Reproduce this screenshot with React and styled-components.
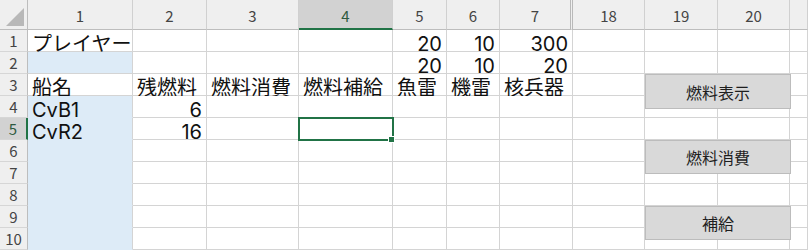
import React from 'react';
import styled, { createGlobalStyle, css } from 'styled-components';

const GlobalStyle = createGlobalStyle`
  body {
    margin: 0;
    background: #ffffff;
    overflow: hidden;
    font-family: "Noto Sans CJK JP", "Noto Sans", sans-serif;
  }
`;

const GREEN = '#217346';
const GRID = '#d4d4d4';
const FILL = '#ddebf7';

const columns = [
  { label: '1', w: 105 },
  { label: '2', w: 74 },
  { label: '3', w: 92 },
  { label: '4', w: 94, selected: true },
  { label: '5', w: 54 },
  { label: '6', w: 53 },
  { label: '7', w: 73, hiddenAfter: true },
  { label: '18', w: 72 },
  { label: '19', w: 73 },
  { label: '20', w: 72 },
  { label: '', w: null }
];

// each row: values for columns 1..last, numbers are right aligned
const rows = [
  ['プレイヤー', '', '', '', 20, 10, 300],
  ['', '', '', '', 20, 10, 20],
  ['船名', '残燃料', '燃料消費', '燃料補給', '魚雷', '機雷', '核兵器'],
  ['CvB1', 6],
  ['CvR2', 16],
  [],
  [],
  [],
  [],
  []
];

const filled = (r, c) => c === 0 && r !== 0 && r !== 2;
const selectedCell = { r: 4, c: 3 };

const buttons = [
  { label: '燃料表示', top: 74, height: 35 },
  { label: '燃料消費', top: 140, height: 34 },
  { label: '補給', top: 206, height: 34 }
];

export default function App() {
  const template = `28px ${columns
    .map((col) => (col.w ? `${col.w}px` : '1fr'))
    .join(' ')}`;

  return (
    <>
      <GlobalStyle />
      <Sheet>
        <Grid style={{ gridTemplateColumns: template }}>
          <Corner>
            <CornerTriangle />
          </Corner>
          {columns.map((col, i) => (
            <ColHeader
              key={`h${i}`}
              $selected={col.selected}
              $double={col.hiddenAfter}
            >
              {col.label}
            </ColHeader>
          ))}
          {rows.map((row, r) => (
            <React.Fragment key={r}>
              <RowHeader $selected={r === selectedCell.r}>{r + 1}</RowHeader>
              {columns.map((col, c) => {
                const value = row[c];
                const isNum = typeof value === 'number';
                const isSel = r === selectedCell.r && c === selectedCell.c;
                return (
                  <Cell
                    key={c}
                    $fill={filled(r, c)}
                    $fillBelow={filled(r + 1, c)}
                    $num={isNum}
                    $selected={isSel}
                  >
                    {value !== undefined && value !== '' ? value : null}
                  </Cell>
                );
              })}
            </React.Fragment>
          ))}
        </Grid>
        {buttons.map((b) => (
          <SheetButton key={b.label} style={{ top: b.top, height: b.height }}>
            {b.label}
          </SheetButton>
        ))}
      </Sheet>
    </>
  );
}

const Sheet = styled.div`
  position: relative;
  width: 808px;
  height: 250px;
  overflow: hidden;
  background: #ffffff;
`;

const Grid = styled.div`
  display: grid;
  grid-template-rows: 30px repeat(10, 22px);
`;

const Corner = styled.div`
  position: relative;
  background: #efefef;
  border-right: 1px solid #bdbdbd;
  border-bottom: 1px solid #bdbdbd;
  box-sizing: border-box;
`;

const CornerTriangle = styled.div`
  position: absolute;
  right: 3px;
  bottom: 3px;
  width: 0;
  height: 0;
  border-left: 18px solid transparent;
  border-bottom: 18px solid #b8b8b8;
`;

const ColHeader = styled.div`
  display: flex;
  align-items: center;
  justify-content: center;
  padding-top: 2px;
  box-sizing: border-box;
  background: #efefef;
  border-right: 1px solid #d0d0d0;
  border-bottom: 1px solid #bdbdbd;
  font-size: 15px;
  color: #444444;

  ${({ $double }) =>
    $double &&
    css`
      border-right: 3px double #b9b9b9;
    `}

  ${({ $selected }) =>
    $selected &&
    css`
      background: #d2d2d2;
      border-bottom: 2px solid ${GREEN};
      color: #2e5a40;
    `}
`;

const RowHeader = styled.div`
  display: flex;
  align-items: center;
  justify-content: center;
  box-sizing: border-box;
  background: #efefef;
  border-right: 1px solid #bdbdbd;
  border-bottom: 1px solid #d6d6d6;
  font-size: 15px;
  color: #444444;

  ${({ $selected }) =>
    $selected &&
    css`
      background: #d2d2d2;
      border-right: 2px solid ${GREEN};
      color: #2e5a40;
    `}
`;

const Cell = styled.div`
  position: relative;
  display: flex;
  align-items: flex-end;
  justify-content: ${({ $num }) => ($num ? 'flex-end' : 'flex-start')};
  box-sizing: border-box;
  padding: 0 4px 0 4px;
  background: ${({ $fill }) => ($fill ? FILL : '#ffffff')};
  border-right: 1px solid ${GRID};
  border-bottom: 1px solid
    ${({ $fill, $fillBelow }) => ($fill && $fillBelow ? FILL : GRID)};
  font-family: Inter, "Noto Sans CJK JP", sans-serif;
  font-size: 20px;
  line-height: 13px;
  color: #111111;
  white-space: nowrap;

  ${({ $selected }) =>
    $selected &&
    css`
      z-index: 2;
      outline: 2px solid ${GREEN};
      outline-offset: -1px;

      &::after {
        content: '';
        position: absolute;
        right: -3px;
        bottom: -4px;
        width: 5px;
        height: 5px;
        background: ${GREEN};
        border: 1px solid #ffffff;
      }
    `}
`;

const SheetButton = styled.div`
  position: absolute;
  left: 645px;
  width: 146px;
  box-sizing: border-box;
  display: flex;
  align-items: center;
  justify-content: center;
  background: #d9d9d9;
  border: 1px solid #bcbcbc;
  font-size: 16px;
  color: #1e1e1e;
  z-index: 3;
`;
